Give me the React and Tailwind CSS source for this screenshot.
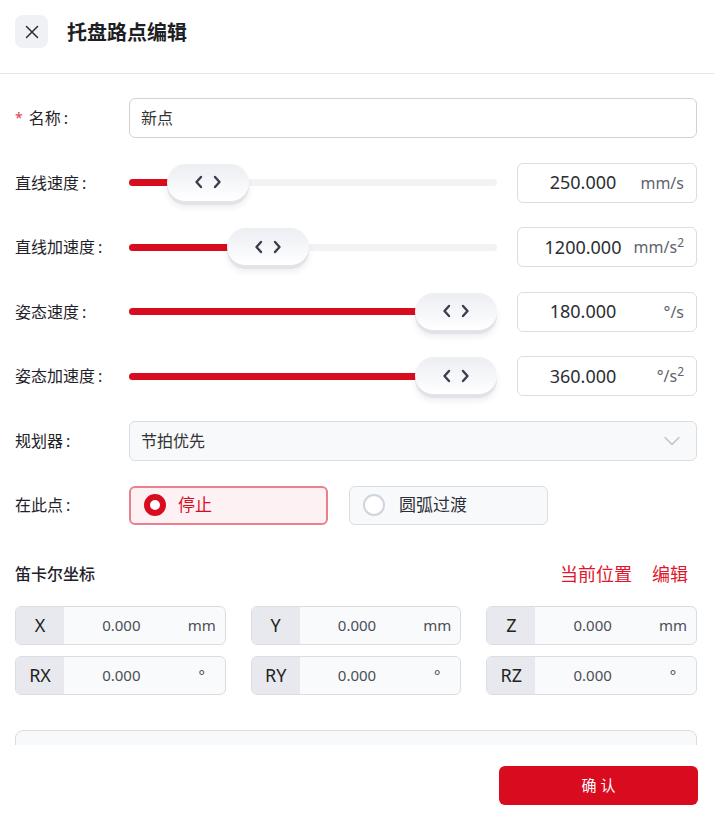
import React from "react";

const sliders = [
  { label: "直线速度", value: "250.000", unit: "mm/s", sup: false, left: 38 },
  { label: "直线加速度", value: "1200.000", unit: "mm/s", sup: true, left: 98 },
  { label: "姿态速度", value: "180.000", unit: "°/s", sup: false, left: 286 },
  { label: "姿态加速度", value: "360.000", unit: "°/s", sup: true, left: 286 },
];

const coords = [
  { k: "X", u: "mm" },
  { k: "Y", u: "mm" },
  { k: "Z", u: "mm" },
  { k: "RX", u: "°" },
  { k: "RY", u: "°" },
  { k: "RZ", u: "°" },
];

function Label({ children, required }) {
  return (
    <div className="w-[114px] shrink-0 flex items-center text-[16px] text-[#1f2329]">
      {required && <span className="text-[#e23a4a] text-[14px] mr-[6px] leading-none">*</span>}
      <span>{children}</span>
      <span className="ml-[3px]">:</span>
    </div>
  );
}

function Thumb({ left }) {
  return (
    <div
      className="absolute top-1/2 -translate-y-[19px] w-[82px] h-[37px] rounded-full bg-gradient-to-b from-[#eceef3] to-[#ffffff] shadow-[0_4px_0_#e2e3e9,0_7px_6px_rgba(0,0,0,0.07)] flex items-center justify-center gap-[10px]"
      style={{ left }}
    >
      <svg width="9" height="14" viewBox="0 0 9 14" fill="none">
        <path d="M7 2 L2.5 7 L7 12" stroke="#3a3f4b" strokeWidth="2.4" strokeLinecap="round" strokeLinejoin="round" />
      </svg>
      <svg width="9" height="14" viewBox="0 0 9 14" fill="none">
        <path d="M2 2 L6.5 7 L2 12" stroke="#3a3f4b" strokeWidth="2.4" strokeLinecap="round" strokeLinejoin="round" />
      </svg>
    </div>
  );
}

export default function App() {
  return (
    <div className="w-[714px] h-[826px] flex flex-col bg-white font-['Noto_Sans','Noto_Sans_CJK_SC',sans-serif] text-[#1f2329]">
      <header className="h-[74px] shrink-0 flex items-start pt-[15px] px-[15px] border-b border-[#e3e3e8]">
        <button className="w-[33px] h-[33px] rounded-[8px] bg-[#f0f1f5] flex items-center justify-center">
          <svg width="14" height="14" viewBox="0 0 14 14" fill="none">
            <path d="M1.5 1.5 L12.5 12.5 M12.5 1.5 L1.5 12.5" stroke="#2a2d33" strokeWidth="1.5" strokeLinecap="round" />
          </svg>
        </button>
        <h1 className="ml-[19px] leading-[36px] text-[20px] font-bold text-[#1d1f24]">托盘路点编辑</h1>
      </header>

      <div className="flex-1 overflow-hidden pl-[15px] pr-[17px] pt-[24px] flex flex-col">
        <div className="flex flex-col gap-[24.5px]">
          <div className="flex items-center h-10">
            <Label required>名称</Label>
            <div className="flex-1 h-10 border border-[#d6cfd4] rounded-[6px] px-[11px] flex items-center text-[16px] text-[#333]">
              新点
            </div>
          </div>

          {sliders.map((s) => (
            <div key={s.label} className="flex items-center h-10">
              <Label>{s.label}</Label>
              <div className="w-[368px] shrink-0 relative h-10 flex items-center">
                <div className="relative w-full h-[7px] rounded-full bg-[#f2f2f4]">
                  <div className="absolute left-0 top-0 h-full rounded-full bg-[#d90b1f]" style={{ width: s.left + 41 }} />
                </div>
                <Thumb left={s.left} />
              </div>
              <div className="ml-[20px] w-[180px] shrink-0 h-10 border border-[#dcdde3] rounded-[6px] flex items-center">
                <span className="w-[130px] shrink-0 text-center text-[18px] text-[#2b2e35]">{s.value}</span>
                <div className="flex-1 min-w-0 flex justify-end pr-[12px] text-[16px] text-[#5f6470] whitespace-nowrap">
                  <span>
                    {s.unit}
                    {s.sup && <sup>2</sup>}
                  </span>
                </div>
              </div>
            </div>
          ))}

          <div className="flex items-center h-10">
            <Label>规划器</Label>
            <div className="flex-1 h-10 border border-[#dcdde3] bg-[#f8f9fb] rounded-[6px] pl-[11px] pr-[16px] flex items-center justify-between text-[16px] text-[#333]">
              <span>节拍优先</span>
              <svg width="16" height="10" viewBox="0 0 16 10" fill="none">
                <path d="M1 1.5 L8 8.5 L15 1.5" stroke="#b9bdc6" strokeWidth="1.2" strokeLinecap="round" strokeLinejoin="round" />
              </svg>
            </div>
          </div>

          <div className="flex items-center h-10">
            <Label>在此点</Label>
            <div className="flex gap-[21px]">
              <div className="w-[199px] h-[39px] rounded-[6px] border-2 border-[#e9808b] bg-[#fdf1f3] flex items-center pl-[13px]">
                <span className="w-[22px] h-[22px] rounded-full border-[6px] border-[#d90b1f] bg-white" />
                <span className="ml-[12px] text-[17px] text-[#d90b1f]">停止</span>
              </div>
              <div className="w-[199px] h-[39px] rounded-[6px] border border-[#dcdde3] bg-[#f8f9fb] flex items-center pl-[13px]">
                <span className="w-[22px] h-[22px] rounded-full border-2 border-[#d0d4db] bg-white" />
                <span className="ml-[14px] text-[17px] text-[#2b2e35]">圆弧过渡</span>
              </div>
            </div>
          </div>
        </div>

        <div className="mt-[37px] flex items-center justify-between h-[24px]">
          <span className="text-[16px] font-medium text-[#1f2329]">笛卡尔坐标</span>
          <div className="flex gap-[20px] pr-[9px] text-[18px] text-[#e0162b]">
            <span>当前位置</span>
            <span>编辑</span>
          </div>
        </div>

        <div className="mt-[20px] grid grid-cols-3 gap-x-[25px] gap-y-[11px]">
          {coords.map((c) => (
            <div key={c.k} className="h-[39px] border border-[#dcdde3] rounded-[6px] overflow-hidden flex bg-[#f9fafb]">
              <div className="w-[48px] shrink-0 bg-[#e8e9ee] flex items-center justify-center text-[18px] text-[#222]">
                {c.k}
              </div>
              <div className="flex-1 flex items-center justify-center text-[15px] text-[#4b4f57]">0.000</div>
              <div className="w-[46px] shrink-0 flex items-center justify-center text-[15px] text-[#4b4f57]">{c.u}</div>
            </div>
          ))}
        </div>

        <div className="mt-[35px] h-[60px] shrink-0 border border-[#dcdde3] rounded-[8px] bg-[#f8f9fb]" />
      </div>

      <footer className="h-[81px] shrink-0 flex items-center justify-end pr-[16px] bg-white">
        <button className="w-[199px] h-[39px] rounded-[6px] bg-[#d90b1f] text-white text-[15px]">确 认</button>
      </footer>
    </div>
  );
}
